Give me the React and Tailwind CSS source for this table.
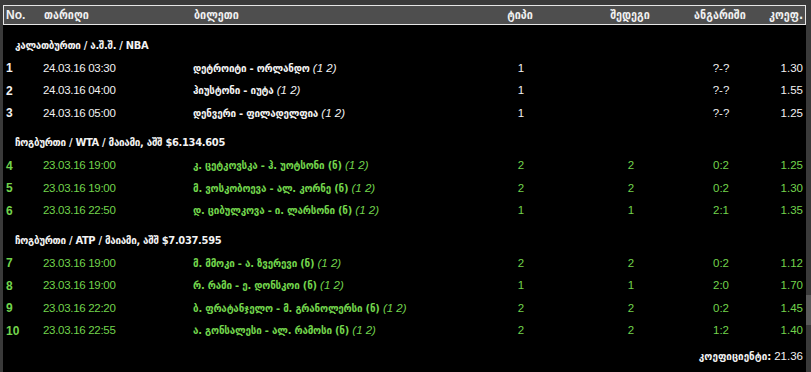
import React from 'react';

const GEO = { fontFamily: '"DejaVu Sans Condensed", "DejaVu Sans", sans-serif' };
const LAT = { fontFamily: '"Liberation Sans", Arial, sans-serif' };

const sections = [
  {
    title: 'კალათბურთი / ა.შ.შ. / NBA',
    color: 'text-[#f2f2f2]',
    rows: [
      { n: 1, date: '24.03.16 03:30', ticket: 'დეტროიტი - ორლანდო', type: '1', result: '', score: '?-?', coef: '1.30' },
      { n: 2, date: '24.03.16 04:00', ticket: 'ჰიუსტონი - იუტა', type: '1', result: '', score: '?-?', coef: '1.55' },
      { n: 3, date: '24.03.16 05:00', ticket: 'დენვერი - ფილადელფია', type: '1', result: '', score: '?-?', coef: '1.25' },
    ],
  },
  {
    title: 'ჩოგბურთი / WTA / მაიამი, აშშ $6.134.605',
    color: 'text-[#72d44c]',
    rows: [
      { n: 4, date: '23.03.16 19:00', ticket: 'კ. ცეტკოვსკა - ჰ. უოტსონი (ნ)', type: '2', result: '2', score: '0:2', coef: '1.25' },
      { n: 5, date: '23.03.16 19:00', ticket: 'მ. ვოსკობოევა - ალ. კორნე (ნ)', type: '2', result: '2', score: '0:2', coef: '1.30' },
      { n: 6, date: '23.03.16 22:50', ticket: 'დ. ციბულკოვა - ი. ლარსონი (ნ)', type: '1', result: '1', score: '2:1', coef: '1.35' },
    ],
  },
  {
    title: 'ჩოგბურთი / ATP / მაიამი, აშშ $7.037.595',
    color: 'text-[#72d44c]',
    rows: [
      { n: 7, date: '23.03.16 19:00', ticket: 'მ. მმოკი - ა. ზვერევი (ნ)', type: '2', result: '2', score: '0:2', coef: '1.12' },
      { n: 8, date: '23.03.16 19:00', ticket: 'რ. რამი - ე. დონსკოი (ნ)', type: '1', result: '1', score: '2:0', coef: '1.70' },
      { n: 9, date: '23.03.16 22:20', ticket: 'ბ. ფრატანჯელო - მ. გრანოლერსი (ნ)', type: '2', result: '2', score: '0:2', coef: '1.45' },
      { n: 10, date: '23.03.16 22:55', ticket: 'ა. გონსალესი - ალ. რამოსი (ნ)', type: '2', result: '2', score: '1:2', coef: '1.40' },
    ],
  },
];

const COLS = 'grid grid-cols-[40px_150px_1fr_102px_118px_62px_54px] items-center';

const Row = ({ row, color }) => (
  <div className={`${COLS} h-[22.5px] text-[11.5px] ${color}`} style={LAT}>
    <span className="pl-[3px] font-bold text-[12px]">{row.n}</span>
    <span className="tracking-[-0.3px]">{row.date}</span>
    <span>
      <span className="font-bold text-[11px] tracking-[-0.2px]" style={GEO}>{row.ticket}</span>{' '}
      <span className="italic">(1 2)</span>
    </span>
    <span className="text-center">{row.type}</span>
    <span className="text-center">{row.result}</span>
    <span className="text-center">{row.score}</span>
    <span className="text-right pr-[3px]">{row.coef}</span>
  </div>
);

export default function App() {
  return (
    <div className="w-[811px] h-[372px] bg-[#3a3a3a] pl-[3px] pt-[5px] flex">
      <div className="flex-1 bg-black flex flex-col">
        {/* header */}
        <div className={`${COLS} h-[20px] bg-[#4e4e4e] border border-[#e6e6e6] text-[12px] font-bold text-[#f0f0f0]`} style={GEO}>
          <span className="pl-[2px]" style={LAT}>No.</span>
          <span>თარიღი</span>
          <span>ბილეთი</span>
          <span className="text-center">ტიპი</span>
          <span className="text-center">შედეგი</span>
          <span className="text-center">ანგარიში</span>
          <span className="text-right pr-[2px]">კოეფ.</span>
        </div>

        {sections.map((s, i) => (
          <div key={s.title} className={i === 0 ? 'mt-[10px]' : 'mt-[8px]'}>
            <div className="h-[22px] flex items-center pl-[12px] text-[11px] tracking-[-0.3px] font-bold text-[#f2f2f2]" style={GEO}>
              {s.title}
            </div>
            {s.rows.map((r) => (
              <Row key={r.n} row={r} color={s.color} />
            ))}
          </div>
        ))}

        <div className="mt-[4px] h-[22px] flex items-center justify-end pr-[3px] text-[11.5px] text-[#f2f2f2]">
          <span className="font-bold text-[11px]" style={GEO}>კოეფიციენტი:</span>
          <span className="ml-[3px]" style={LAT}>21.36</span>
        </div>
      </div>
      <div className="w-[5px] flex flex-col">
        <div className="h-[290px]" />
        <div className="h-[30px] bg-[#5a5a5a]" />
      </div>
    </div>
  );
}
